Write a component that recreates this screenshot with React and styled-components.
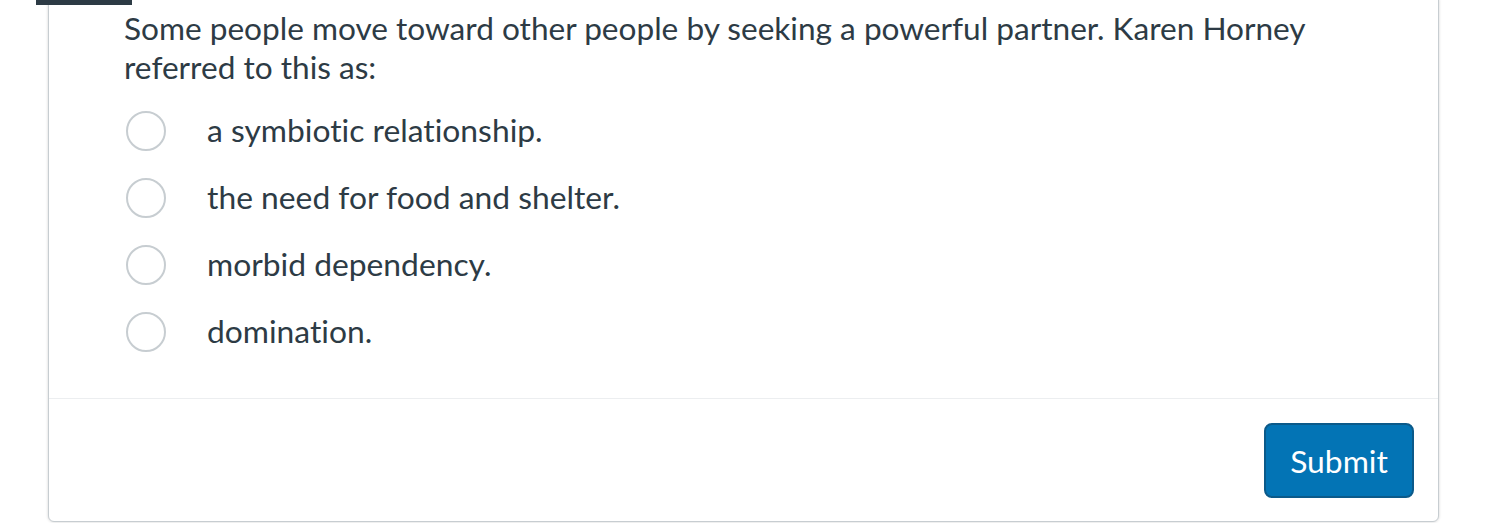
import styled, { createGlobalStyle } from "styled-components";

const GlobalStyle = createGlobalStyle`
  html, body {
    margin: 0;
    padding: 0;
    background: #ffffff;
    overflow: hidden;
  }
  body {
    font-family: Lato, "Open Sans", sans-serif;
    color: #2d3b45;
    font-variant-ligatures: none;
  }
`;

const answers = [
  "a symbiotic relationship.",
  "the need for food and shelter.",
  "morbid dependency.",
  "domination.",
];

function App() {
  return (
    <Page>
      <GlobalStyle />
      <Tab />
      <Card>
        <Body>
          <Question>
            Some people move toward other people by seeking a powerful partner. Karen Horney
            referred to this as:
          </Question>
          <Answers>
            {answers.map((a) => (
              <Answer key={a}>
                <Radio type="radio" name="q1" />
                <AnswerText>{a}</AnswerText>
              </Answer>
            ))}
          </Answers>
        </Body>
        <Footer>
          <SubmitButton>Submit</SubmitButton>
        </Footer>
      </Card>
    </Page>
  );
}

export default App;

const Page = styled.div`
  position: relative;
  padding: 0 49px 0 48px;
  height: 524px;
  box-sizing: border-box;
`;

const Tab = styled.div`
  position: absolute;
  top: 0;
  left: 36px;
  width: 96px;
  height: 6px;
  background: #2d3b45;
  z-index: 2;
`;

const Card = styled.div`
  margin-top: -1px;
  border: 1px solid #c7cdd1;
  border-radius: 0 0 6px 6px;
  box-shadow: 0 0 3px rgba(0, 0, 0, 0.18);
  background: #fff;
`;

const Body = styled.div`
  padding: 9px 24px 33px 75px;
  border-bottom: 1px solid #eceef0;
`;

const Question = styled.p`
  margin: 0;
  font-size: 31.6px;
  line-height: 39px;
`;

const Answers = styled.div`
  margin-top: 10px;
  display: flex;
  flex-direction: column;
`;

const Answer = styled.label`
  display: flex;
  align-items: center;
  height: 67px;
  cursor: pointer;
`;

const Radio = styled.input`
  appearance: none;
  margin: 0 41px 0 2px;
  width: 40px;
  height: 40px;
  border: 2px solid #c7cdd1;
  border-radius: 50%;
  box-sizing: border-box;
  background: #fff;
  flex-shrink: 0;
`;

const AnswerText = styled.span`
  font-size: 31.8px;
  line-height: 39px;
`;

const Footer = styled.div`
  display: flex;
  justify-content: flex-end;
  padding: 24px 24px 23px;
`;

const SubmitButton = styled.button`
  width: 150px;
  height: 75px;
  background: #0374b5;
  border: 2px solid #0b5a8a;
  border-radius: 8px;
  color: #fff;
  font-family: Lato, "Open Sans", sans-serif;
  font-size: 31.8px;
  font-variant-ligatures: none;
  cursor: pointer;
`;
